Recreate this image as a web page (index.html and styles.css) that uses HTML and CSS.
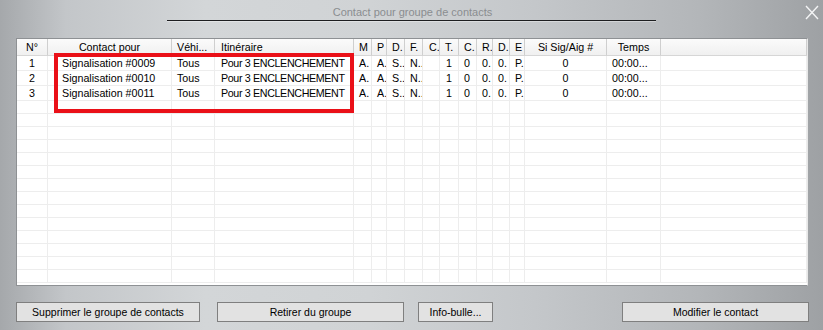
FILE: index.html
```html
<!DOCTYPE html>
<html lang="fr">
<head>
<meta charset="utf-8">
<title>Contact pour groupe de contacts</title>
<link rel="stylesheet" href="styles.css">
</head>
<body>
<div class="window">
  <header class="titlebar">
    <div class="title">Contact pour groupe de contacts</div>
    <div class="title-rule"></div>
    <svg class="close" width="14" height="15" viewBox="0 0 14 15" aria-label="Fermer">
      <path d="M1 1 L13 14 M13 1 L1 14" stroke="#f3f4f5" stroke-width="1.4" fill="none"/>
    </svg>
  </header>

  <div class="list">
    <table class="grid">
      <colgroup>
        <col class="w-num"><col class="w-contact"><col class="w-vehi"><col class="w-itin">
        <col class="w-m"><col class="w-p"><col class="w-d"><col class="w-f"><col class="w-c">
        <col class="w-t"><col class="w-c2"><col class="w-r"><col class="w-d2"><col class="w-e">
        <col class="w-sig"><col class="w-temps"><col class="w-rest">
      </colgroup>
      <thead>
        <tr>
          <th class="center">N°</th>
          <th class="center">Contact pour</th>
          <th>Véhi...</th>
          <th class="itin">Itinéraire</th>
          <th>M</th><th>P</th><th>D.</th><th>F.</th><th class="wide-pad">C.</th>
          <th>T.</th><th>C.</th><th>R.</th><th>D.</th><th>E</th>
          <th class="center">Si Sig/Aig #</th>
          <th class="center">Temps</th>
          <th></th>
        </tr>
      </thead>
      <tbody>
        <tr>
          <td class="center">1</td><td class="contact">Signalisation #0009</td><td>Tous</td><td class="itin caps">Pour 3 ENCLENCHEMENT</td>
          <td>A.</td><td>A.</td><td>S..</td><td>N..</td><td></td><td class="right">1</td><td>0</td><td>0.</td><td>0.</td><td>P.</td>
          <td class="center">0</td><td>00:00...</td><td></td>
        </tr>
        <tr>
          <td class="center">2</td><td class="contact">Signalisation #0010</td><td>Tous</td><td class="itin caps">Pour 3 ENCLENCHEMENT</td>
          <td>A.</td><td>A.</td><td>S..</td><td>N..</td><td></td><td class="right">1</td><td>0</td><td>0.</td><td>0.</td><td>P.</td>
          <td class="center">0</td><td>00:00...</td><td></td>
        </tr>
        <tr>
          <td class="center">3</td><td class="contact">Signalisation #0011</td><td>Tous</td><td class="itin caps">Pour 3 ENCLENCHEMENT</td>
          <td>A.</td><td>A.</td><td>S..</td><td>N..</td><td></td><td class="right">1</td><td>0</td><td>0.</td><td>0.</td><td>P.</td>
          <td class="center">0</td><td>00:00...</td><td></td>
        </tr>
        <tr><td></td><td></td><td></td><td></td><td></td><td></td><td></td><td></td><td></td><td></td><td></td><td></td><td></td><td></td><td></td><td></td><td></td></tr>
        <tr><td></td><td></td><td></td><td></td><td></td><td></td><td></td><td></td><td></td><td></td><td></td><td></td><td></td><td></td><td></td><td></td><td></td></tr>
        <tr><td></td><td></td><td></td><td></td><td></td><td></td><td></td><td></td><td></td><td></td><td></td><td></td><td></td><td></td><td></td><td></td><td></td></tr>
        <tr><td></td><td></td><td></td><td></td><td></td><td></td><td></td><td></td><td></td><td></td><td></td><td></td><td></td><td></td><td></td><td></td><td></td></tr>
        <tr><td></td><td></td><td></td><td></td><td></td><td></td><td></td><td></td><td></td><td></td><td></td><td></td><td></td><td></td><td></td><td></td><td></td></tr>
        <tr><td></td><td></td><td></td><td></td><td></td><td></td><td></td><td></td><td></td><td></td><td></td><td></td><td></td><td></td><td></td><td></td><td></td></tr>
        <tr><td></td><td></td><td></td><td></td><td></td><td></td><td></td><td></td><td></td><td></td><td></td><td></td><td></td><td></td><td></td><td></td><td></td></tr>
        <tr><td></td><td></td><td></td><td></td><td></td><td></td><td></td><td></td><td></td><td></td><td></td><td></td><td></td><td></td><td></td><td></td><td></td></tr>
        <tr><td></td><td></td><td></td><td></td><td></td><td></td><td></td><td></td><td></td><td></td><td></td><td></td><td></td><td></td><td></td><td></td><td></td></tr>
        <tr><td></td><td></td><td></td><td></td><td></td><td></td><td></td><td></td><td></td><td></td><td></td><td></td><td></td><td></td><td></td><td></td><td></td></tr>
        <tr><td></td><td></td><td></td><td></td><td></td><td></td><td></td><td></td><td></td><td></td><td></td><td></td><td></td><td></td><td></td><td></td><td></td></tr>
        <tr><td></td><td></td><td></td><td></td><td></td><td></td><td></td><td></td><td></td><td></td><td></td><td></td><td></td><td></td><td></td><td></td><td></td></tr>
        <tr><td></td><td></td><td></td><td></td><td></td><td></td><td></td><td></td><td></td><td></td><td></td><td></td><td></td><td></td><td></td><td></td><td></td></tr>
        <tr><td></td><td></td><td></td><td></td><td></td><td></td><td></td><td></td><td></td><td></td><td></td><td></td><td></td><td></td><td></td><td></td><td></td></tr>
      </tbody>
    </table>
    <div class="highlight"></div>
  </div>

  <div class="actions">
    <button class="btn btn-delete">Supprimer le groupe de contacts</button>
    <button class="btn btn-remove">Retirer du groupe</button>
    <button class="btn btn-info">Info-bulle...</button>
    <button class="btn btn-edit">Modifier le contact</button>
  </div>
</div>
</body>
</html>
```

FILE: styles.css
```css
* { box-sizing: border-box; }

html, body {
  margin: 0;
  padding: 0;
}

body {
  width: 823px;
  height: 330px;
  overflow: hidden;
  font-family: "Liberation Sans", Arial, sans-serif;
  background: linear-gradient(90deg, #a5a8ab 0%, #c3c6c9 8%, #d3d6d8 25%, #d0d3d5 45%, #c4c7ca 65%, #b3b6b9 85%, #9ea1a4 100%);
}

.window {
  position: relative;
  width: 823px;
  height: 330px;
}

.titlebar {
  position: relative;
  height: 38px;
  padding-top: 5px;
}

.title {
  text-align: center;
  font-size: 11px;
  line-height: 14px;
  color: #8a8d90;
  padding-left: 2px;
}

.title-rule {
  margin-top: 1px;
  margin-left: 167px;
  width: 489px;
  height: 1px;
  background: #1d1e20;
  box-shadow: 0 1px 0 rgba(255, 255, 255, 0.35);
}

.close {
  position: absolute;
  top: 5px;
  left: 805px;
}

.list {
  position: relative;
  margin-left: 16px;
  width: 792px;
  height: 248px;
  border: 1px solid #8e9194;
  border-right-color: #e8e8e8;
  background: #ffffff;
  overflow: hidden;
}

.grid {
  table-layout: fixed;
  border-collapse: separate;
  border-spacing: 0;
  width: 790px;
  font-size: 10.7px;
  color: #000;
}

.w-num { width: 31px; }
.w-contact { width: 124px; }
.w-vehi { width: 43px; }
.w-itin { width: 139px; }
.w-m { width: 18px; }
.w-p { width: 15px; }
.w-d { width: 18px; }
.w-f { width: 18px; }
.w-c { width: 17px; }
.w-t { width: 19px; }
.w-c2 { width: 18px; }
.w-r { width: 16px; }
.w-d2 { width: 17px; }
.w-e { width: 15px; }
.w-sig { width: 82px; }
.w-temps { width: 54px; }
.w-rest { width: 146px; }

.grid th {
  height: 17px;
  padding: 0 0 0 5px;
  font-weight: normal;
  text-align: left;
  line-height: 16px;
  vertical-align: top;
  white-space: nowrap;
  overflow: hidden;
  background: linear-gradient(#fbfbfb, #f0f0f0);
  border-right: 1px solid #cfcfcf;
  border-bottom: 1px solid #d6d6d6;
}

.grid th:first-child { padding-left: 0; }

.grid td {
  height: 13px;
  padding: 0 0 0 5px;
  line-height: 14px;
  white-space: nowrap;
  overflow: hidden;
  border-right: 1px solid #ededed;
  border-bottom: 1px solid #ededed;
}

.grid .center { text-align: center; padding-left: 0; }
.grid .right { text-align: right; padding-right: 6px; }
.grid .contact { padding-left: 14px; }
.grid .itin { padding-left: 6px; }
.grid .caps { letter-spacing: -0.35px; }
.grid .wide-pad { padding-left: 6px; }

.highlight {
  position: absolute;
  left: 37px;
  top: 14px;
  width: 300px;
  height: 60px;
  border: 4px solid #ea1018;
}

.actions {
  display: flex;
  margin-top: 16px;
  padding: 0 14px 0 16px;
}

.btn {
  height: 20px;
  padding: 0;
  font-family: "Liberation Sans", Arial, sans-serif;
  font-size: 10.5px;
  color: #000;
  background: #e2e2e2;
  border: 1px solid #7f7f7f;
  border-radius: 0;
}

.btn-delete { width: 184px; }
.btn-remove { width: 187px; margin-left: 17px; }
.btn-info { width: 75px; margin-left: 14px; }
.btn-edit { width: 187px; margin-left: auto; }
```
